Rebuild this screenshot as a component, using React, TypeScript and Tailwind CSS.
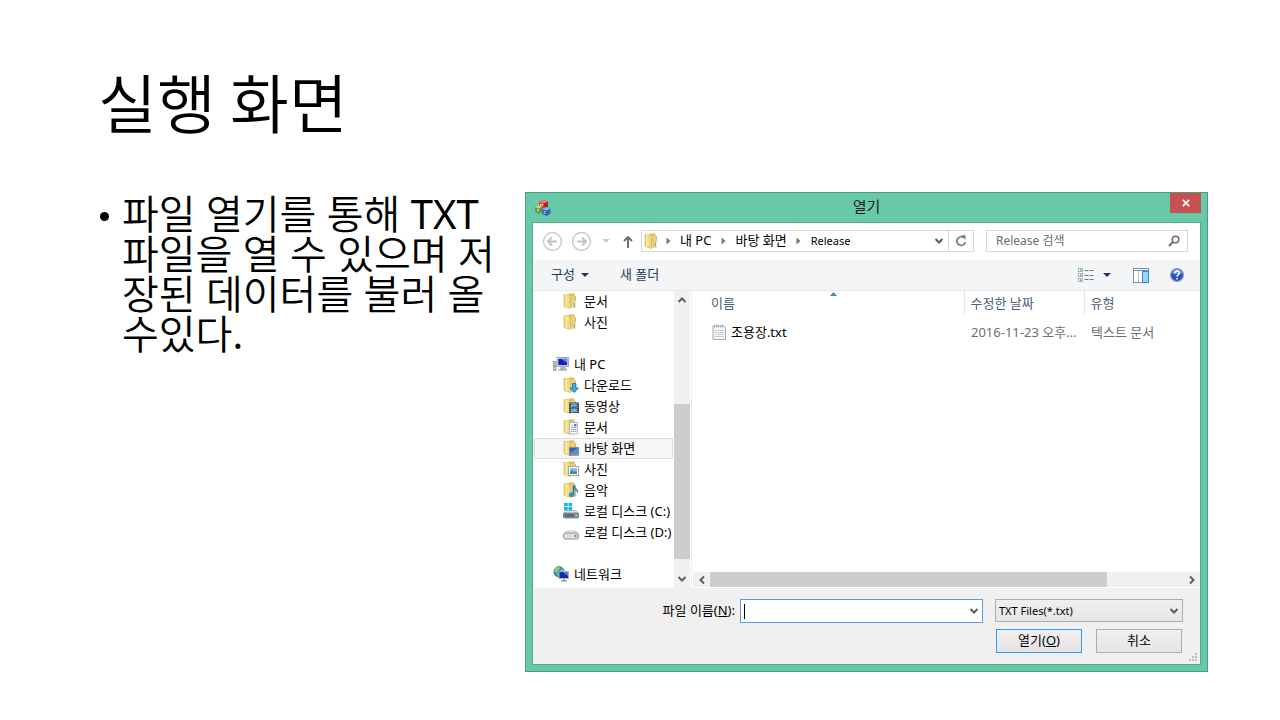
import type { ReactNode } from "react";

function Svg({ w = 16, h = 16, children }: { w?: number; h?: number; children: ReactNode }) {
  return (
    <svg width={w} height={h} viewBox={`0 0 ${w} ${h}`} className="block shrink-0" aria-hidden="true">
      {children}
    </svg>
  );
}

function FolderShape() {
  return (
    <>
      <path d="M1 1h6v13.500l-6-1z" fill="#eed27a" />
      <path d="M6 .5h5.500V3H13v11.500H6z" fill="#d9bb58" />
      <path d="M7.500 2.500h4.500v11.500H7.500z" fill="#e9cf78" />
      <path d="M2 1.500 7 3.500V15.500l-5-2z" fill="#f8e69c" />
      <path d="M4.500 2.500 7.500 3.500V15.500l-3-1z" fill="#efd987" />
      <path d="M1 1v12.500l6.500 2V4" fill="none" stroke="#cfb04c" strokeWidth=".6" />
    </>
  );
}

function FolderIcon() {
  return (
    <Svg>
      <FolderShape />
      <path d="M11.500 10v3.500" stroke="#5db4e6" />
      <path d="M12.500 8v6.500" stroke="#e6eee0" />
    </Svg>
  );
}

function DownloadIcon() {
  return (
    <Svg>
      <FolderShape />
      <path d="M9.500 6.500h3.500V11h2.500L11.200 15.600 7 11h2.500z" fill="#3ba7e8" stroke="#1b73b4" strokeWidth=".8" />
    </Svg>
  );
}

function VideoIcon() {
  return (
    <Svg>
      <FolderShape />
      <rect x="6" y="4.500" width="10" height="10.500" fill="#30353b" />
      <rect x="8" y="5" width="6" height="4.500" fill="#4c93c8" />
      <rect x="8" y="10.300" width="6" height="4.200" fill="#6c9dbb" />
      <path d="M8 9l2.500-3 3 3M8 14l3-2.500 3 2.500" stroke="#b9d3c0" strokeWidth=".7" fill="none" />
      <path d="M7 5v10M15 5v10" stroke="#d9dde0" strokeDasharray="1 1" strokeWidth=".8" />
    </Svg>
  );
}

function DocumentsIcon() {
  return (
    <Svg>
      <FolderShape />
      <rect x="6.500" y="3.500" width="8" height="11.500" fill="#f8fafc" stroke="#a3afb9" strokeWidth=".8" />
      <path d="M8 6.500h2M8 8.500h5.500M8 10.500h5.500M8 12.500h5.500" stroke="#99aaba" strokeWidth=".9" />
      <rect x="11" y="5" width="2.500" height="2.500" fill="#398ed4" />
    </Svg>
  );
}

function DesktopIcon() {
  return (
    <Svg>
      <FolderShape />
      <rect x="6.500" y="7.500" width="9" height="6" fill="#2f65ae" stroke="#7d8b9a" />
      <path d="M7 13l8-5v5z" fill="#4f91d5" />
      <path d="M6 15h10" stroke="#3f4a58" />
    </Svg>
  );
}

function PicturesIcon() {
  return (
    <Svg>
      <FolderShape />
      <rect x="5.500" y="5.500" width="10" height="9" fill="#fff" stroke="#9aa8b2" />
      <rect x="7" y="7" width="7" height="6" fill="#82c2e6" />
      <path d="M7 13v-2l2-2 2 2 1-1 2 1v2z" fill="#4e8b79" />
    </Svg>
  );
}

function MusicIcon() {
  return (
    <Svg>
      <FolderShape />
      <path d="M10.500 4v8" stroke="#1674bd" strokeWidth="1.500" />
      <path d="M11 3c0 3 4.500 3.500 3.500 7.500C14 8.500 12.500 8 11 7.500z" fill="#3faaf0" stroke="#1674bd" strokeWidth=".7" />
      <ellipse cx="8.700" cy="12.700" rx="2.500" ry="2" fill="#3297df" stroke="#1265a8" strokeWidth=".6" />
    </Svg>
  );
}

function ComputerIcon() {
  return (
    <Svg>
      <rect x=".5" y="5.500" width="2.500" height="9" fill="#c7cbd0" stroke="#888e95" strokeWidth=".7" />
      <rect x="1.200" y="9" width="1.200" height="2" fill="#52ae45" />
      <rect x="4" y="1.500" width="11.500" height="9" fill="#dbdfe6" stroke="#9298a3" strokeWidth=".8" />
      <rect x="5.300" y="2.800" width="8.900" height="6.300" fill="#1624ae" />
      <path d="M8 2.800h6.200V7z" fill="#6389f1" />
      <path d="M8 10.500h4l1.500 3H6.500z" fill="#adb3bb" />
      <path d="M5.500 14h8.500" stroke="#858c96" />
    </Svg>
  );
}

function SystemDriveIcon() {
  return (
    <Svg>
      <path d="M3 7.500h10l2.500 3H.5z" fill="#dfe2e4" stroke="#a5abb0" strokeWidth=".7" />
      <rect x=".5" y="10" width="15" height="5" rx="1" fill="#8d989f" stroke="#6f777c" strokeWidth=".8" />
      <rect x="1.500" y="11" width="10" height="3" fill="#54707e" />
      <rect x="12.500" y="11.500" width="2" height="2" fill="#5fe05a" />
      <path d="M1 0h3.700v3.300H1zM5.500 0h3.700v3.300H5.500zM1 4.100h3.700v3.300H1zM5.500 4.100h3.700v3.300H5.500z" fill="#12b5f2" />
    </Svg>
  );
}

function DriveIcon() {
  return (
    <Svg>
      <path d="M3.500 7h9l2.500 3H1z" fill="#f1f2f3" stroke="#b3b7bb" strokeWidth=".7" />
      <rect x=".5" y="9" width="15" height="6" rx="2" fill="#dfe0e1" stroke="#85898d" strokeWidth=".9" />
      <rect x="11.500" y="11" width="2" height="2" fill="#48a835" />
    </Svg>
  );
}

function NetworkIcon() {
  return (
    <Svg>
      <circle cx="6" cy="5.700" r="5.200" fill="#2b8fcf" stroke="#176aa3" strokeWidth=".6" />
      <path d="M2 2.500C4 .5 6.500.7 7 2S5 4 4.500 6 2 6.500 1 5zM8 2.500l2.500 1.500-1 3-2-1zM3.500 7.500l3 .5-1 2.500z" fill="#86d252" />
      <rect x="6" y="5.500" width="9.500" height="7" fill="#1428aa" stroke="#aeb8c7" strokeWidth=".9" />
      <path d="M9.500 6h5.500v4z" fill="#557ee8" />
      <path d="M11 13v2M8 15h6" stroke="#6b7480" />
    </Svg>
  );
}

function Chevron({ dir = "down" }: { dir?: "down" | "up" | "left" | "right" }) {
  const paths = {
    down: "M1.500 3 5 6.500 8.500 3",
    up: "M1.500 7 5 3.500 8.500 7",
    left: "M7 1.500 3.500 5 7 8.500",
    right: "M3 1.500 6.500 5 3 8.500",
  };
  return (
    <Svg w={10} h={10}>
      <path d={paths[dir]} fill="none" stroke="#5d5d5d" strokeWidth="2" />
    </Svg>
  );
}

function Crumb({ children }: { children: ReactNode }) {
  return (
    <li className="flex items-center">
      <span className="flex w-4 justify-center">
        <Svg w={5} h={8}>
          <path d="M.5.5 4.500 4 .5 7.500z" fill="#777" />
        </Svg>
      </span>
      <button type="button" className="px-1 pb-0.5">
        {children}
      </button>
    </li>
  );
}

const places: { label: string; icon: ReactNode; root?: boolean; gap?: boolean; active?: boolean }[] = [
  { label: "문서", icon: <FolderIcon /> },
  { label: "사진", icon: <FolderIcon /> },
  { label: "내 PC", icon: <ComputerIcon />, root: true, gap: true },
  { label: "다운로드", icon: <DownloadIcon /> },
  { label: "동영상", icon: <VideoIcon /> },
  { label: "문서", icon: <DocumentsIcon /> },
  { label: "바탕 화면", icon: <DesktopIcon />, active: true },
  { label: "사진", icon: <PicturesIcon /> },
  { label: "음악", icon: <MusicIcon /> },
  { label: "로컬 디스크 (C:)", icon: <SystemDriveIcon /> },
  { label: "로컬 디스크 (D:)", icon: <DriveIcon /> },
  { label: "네트워크", icon: <NetworkIcon />, root: true, gap: true },
];

function TitleBar() {
  return (
    <header className="grid h-[29px] grid-cols-[40px_1fr_40px]">
      <div className="flex items-center pl-0.5">
        <Svg w={18} h={18}>
          <path d="M5 3 9 1l5 1.500v5L10 10 5 8z" fill="#d44031" />
          <path d="M5 3 9 1l5 1.500-4 2z" fill="#f17c64" />
          <path d="M10 4.500 14 2.500v5L10 10z" fill="#a92720" />
          <path d="M1 8l3-2 4 1.500v5L5 15l-4-2z" fill="#5c9a3b" />
          <path d="M1 8l3-2 4 1.500-3 2z" fill="#c2d58a" />
          <path d="M8 10l4-2 4.500 1.500v5L13 17l-5-2z" fill="#2c6cb5" />
          <path d="M8 10l4-2 4.500 1.500L13 11.500z" fill="#83b9e7" />
          <path d="M11.500 12.500c-2-1-2 2.500 0 2M6.500 7V5l1 1 1-1v2M3 10.500h2M4 10.500v2.500" stroke="#fff" strokeWidth=".7" fill="none" />
        </Svg>
      </div>
      <h2 className="pt-[3px] text-center text-[15px] leading-5 text-[#222]">열기</h2>
      <div className="flex items-start justify-end">
        <button type="button" aria-label="닫기" className="flex h-5 w-[31px] shrink-0 items-center justify-center bg-[#c75050]">
          <Svg w={8} h={8}>
            <path d="M.8.8l6.400 6.400M7.200.8.8 7.200" stroke="#fff" strokeWidth="1.700" />
          </Svg>
        </button>
      </div>
    </header>
  );
}

function AddressRow() {
  return (
    <div className="flex h-[37px] items-center bg-white pr-3 pb-px pl-[9px]">
      <button type="button" aria-label="뒤로" className="mr-2">
        <Svg w={21} h={21}>
          <circle cx="10.500" cy="10.500" r="9" fill="none" stroke="#c9c9c9" strokeWidth="1.400" />
          <path d="M15 10.500H6.500M10 6.500l-4 4 4 4" fill="none" stroke="#c3c3c3" strokeWidth="2" />
        </Svg>
      </button>
      <button type="button" aria-label="앞으로" className="mr-2.5">
        <Svg w={21} h={21}>
          <circle cx="10.500" cy="10.500" r="9" fill="none" stroke="#c9c9c9" strokeWidth="1.400" />
          <path d="M6 10.500h8.500M11 6.500l4 4-4 4" fill="none" stroke="#c3c3c3" strokeWidth="2" />
        </Svg>
      </button>
      <button type="button" aria-label="최근 위치" className="mr-3">
        <Svg w={8} h={4}>
          <path d="M.5 0h7L4 4z" fill="#c8c8c8" />
        </Svg>
      </button>
      <button type="button" aria-label="위로" className="mr-[7px]">
        <Svg w={12} h={13}>
          <path d="M6 13V2M2 6l4-4 4 4" fill="none" stroke="#6b6b6b" strokeWidth="1.900" />
        </Svg>
      </button>
      <nav aria-label="주소" className="mr-3 flex h-[22px] min-w-0 flex-1 items-center border border-[#d9d9d9] pl-0.5">
        <FolderIcon />
        <ol className="flex flex-1">
          <Crumb>내 PC</Crumb>
          <Crumb>바탕 화면</Crumb>
          <Crumb>
            <span className="text-[11px]">Release</span>
          </Crumb>
        </ol>
        <button type="button" aria-label="이전 위치" className="px-1">
          <Chevron />
        </button>
        <button type="button" aria-label="새로 고침" className="flex h-5 w-[25px] items-center justify-center border-l border-[#d9d9d9]">
          <Svg w={12} h={12}>
            <path d="M8.500 2.500A4.300 4.300 0 1 0 10.300 7" fill="none" stroke="#777" strokeWidth="1.600" />
            <path d="M6 .2h4.500v4.600z" fill="#777" />
          </Svg>
        </button>
      </nav>
      <div className="flex h-[22px] w-[202px] items-center border border-[#d9d9d9] pr-[7px] pl-[9px]">
        <input
          type="text"
          aria-label="Release 검색"
          placeholder="Release 검색"
          className="min-w-0 flex-1 text-[12px] outline-none placeholder:text-[#6d6d6d] placeholder:opacity-100"
        />
        <Svg w={12} h={12}>
          <circle cx="7.500" cy="4.500" r="3.300" fill="none" stroke="#6e6e6e" strokeWidth="1.600" />
          <path d="M5 7 1 11" stroke="#6e6e6e" strokeWidth="2" />
        </Svg>
      </div>
    </div>
  );
}

function Toolbar() {
  return (
    <div className="flex h-[31px] items-center border-b border-[#e4e8ec] bg-[#f4f5f7] pr-4 pl-[18px] text-[#1e395b]">
      <button type="button" className="mr-[31px] flex items-center gap-1.5">
        <span className="pb-0.5">구성</span>
        <Svg w={8} h={4}>
          <path d="M0 0h8L4 4z" fill="#1e395b" />
        </Svg>
      </button>
      <button type="button" className="pb-0.5">
        새 폴더
      </button>
      <button type="button" aria-label="보기" className="mr-[22px] ml-auto flex items-center gap-[9px]">
        <Svg w={16} h={14}>
          <path d="M.5.5h4v3h-4zM.5 5.500h4v3h-4zM.5 10.500h4v3h-4z" fill="#fff" stroke="#8c9aa9" strokeWidth=".8" />
          <path d="M2 1.500h1.500v1.200H2z" fill="#37a349" />
          <path d="M2 6.500h1.500v1.200H2z" fill="#dd3b32" />
          <path d="M2 11.500h1.500v1.200H2z" fill="#337bd0" />
          <path d="M6.500 2.500h4M11.500 2.500h4M6.500 7.500h4M11.500 7.500h4M6.500 11.500h4M11.500 11.500h4" stroke="#66788b" />
        </Svg>
        <Svg w={8} h={4}>
          <path d="M0 0h8L4 4z" fill="#1e395b" />
        </Svg>
      </button>
      <button type="button" aria-label="미리 보기 창" className="mr-[21px]">
        <Svg w={16} h={15}>
          <rect x=".5" y=".5" width="15" height="14" fill="#fff" stroke="#7890a5" />
          <path d="M1 2.500h14" stroke="#7890a5" />
          <path d="M5.500 3v11" stroke="#b1bdc7" />
          <rect x="9.500" y="3.500" width="6" height="11" fill="#9bd3fa" stroke="#2b8adf" />
        </Svg>
      </button>
      <button type="button" aria-label="도움말">
        <Svg w={14} h={14}>
          <circle cx="7" cy="7" r="6.400" fill="#2950bd" stroke="#8a99bb" strokeWidth="1.200" />
          <path d="M2 5a5.200 5.200 0 0 1 10 0C9 7 5 7 2 5z" fill="#6e95e7" />
          <path d="M4.800 5.200c0-3 4.700-2.700 4.500 0C9.200 7 7 6.700 7 8.800M7 10v1.500" fill="none" stroke="#fff" strokeWidth="1.500" />
        </Svg>
      </button>
    </div>
  );
}

function Sidebar() {
  return (
    <div className="flex w-[157px] shrink-0">
      <ul className="min-w-0 flex-1 px-px">
        {places.map((p, i) => (
          <li key={i} className={p.gap ? "pt-[21px]" : ""}>
            <button
              type="button"
              className={
                "flex h-[21px] w-full items-center gap-[5px] border pb-px whitespace-nowrap " +
                (p.active ? "border-[#dedede] bg-[#f7f7f7] " : "border-transparent ") +
                (p.root ? "pl-[18px]" : "pl-7")
              }
            >
              {p.icon}
              <span className="pb-px">{p.label}</span>
            </button>
          </li>
        ))}
      </ul>
      <div className="flex w-4 shrink-0 flex-col items-center bg-[#f0f0f0]">
        <div className="flex h-[18px] items-center">
          <Chevron dir="up" />
        </div>
        <div className="mt-auto h-[155px] w-full bg-[#cdcdcd]" />
        <div className="mt-[11px] flex h-[18px] items-center">
          <Chevron />
        </div>
      </div>
    </div>
  );
}

function FileList() {
  return (
    <div className="ml-px flex min-w-0 flex-1 flex-col border-l border-[#f0f0f0] pl-px">
      <table className="w-full table-fixed border-collapse text-left whitespace-nowrap">
        <colgroup>
          <col />
          <col className="w-[120px]" />
          <col className="w-[116px]" />
        </colgroup>
        <thead className="text-[#4c607a]">
          <tr className="h-6">
            <th className="relative pl-[18px] font-normal">
              이름
              <span className="absolute top-px left-1/2 ml-0.5">
                <Svg w={7} h={4}>
                  <path d="M0 4 3.500 0 7 4z" fill="#4b86ab" />
                </Svg>
              </span>
            </th>
            <th className="border-l border-[#dfe9f5] pl-1.5 font-normal">수정한 날짜</th>
            <th className="border-l border-[#dfe9f5] pl-1.5 font-normal">유형</th>
          </tr>
        </thead>
        <tbody className="text-[#6d6d6d]">
          <tr className="h-[33px]">
            <td className="pl-[19px] text-black">
              <span className="flex items-center gap-1">
                <Svg w={15} h={16}>
                  <path d="M1 2h11l1.500 2v11.500H1z" fill="#f6f7f8" stroke="#999fa3" strokeWidth=".9" />
                  <path d="M2.500.5v3M4.500.5v3M6.500.5v3M8.500.5v3M10.500.5v3" stroke="#a4a9ad" strokeWidth=".8" />
                  <path d="M2.500 6.500h9.500M2.500 8.500h9.500M2.500 10.500h9.500M2.500 12.500h9.500" stroke="#b9cad7" strokeWidth=".9" />
                </Svg>
                조용장.txt
              </span>
            </td>
            <td className="pl-[7px]">2016-11-23 오후...</td>
            <td className="pl-[7px]">텍스트 문서</td>
          </tr>
        </tbody>
      </table>
      <div className="mt-auto mb-px flex h-[15px] items-center bg-[#f0f0f0]">
        <div className="flex w-[17px] justify-center">
          <Chevron dir="left" />
        </div>
        <div className="flex h-full flex-1">
          <div className="h-full w-[84%] bg-[#cdcdcd]" />
        </div>
        <div className="flex w-[17px] justify-center">
          <Chevron dir="right" />
        </div>
      </div>
    </div>
  );
}

function DialogFooter() {
  return (
    <footer className="relative bg-[#f0f0f0] pt-[11px] pr-[17px] pb-[11px]">
      <div className="flex items-start">
        <label htmlFor="file-name" className="mr-[5px] ml-auto leading-[22px]">
          파일 이름(<u>N</u>):
        </label>
        <div className="mr-3 flex h-6 w-[243px] items-center border border-[#569de5] bg-white px-[3px]">
          <span className="h-[15px] w-px bg-black" />
          <input id="file-name" type="text" className="min-w-0 flex-1 outline-none" />
          <Chevron />
        </div>
        <div className="grid h-[23px] w-[188px] items-center border border-[#acacac] bg-linear-to-b from-[#f0f0f0] to-[#e5e5e5]">
          <select aria-label="파일 형식" className="col-start-1 row-start-1 h-[21px] w-full appearance-none pl-[3px] text-[11px] outline-none">
            <option>TXT Files(*.txt)</option>
          </select>
          <span className="pointer-events-none col-start-1 row-start-1 justify-self-end pr-[3px]">
            <Chevron />
          </span>
        </div>
      </div>
      <div className="mt-1.5 flex justify-end gap-3.5 pr-px">
        <button type="button" className="h-6 w-[86px] border border-[#3399ff] bg-linear-to-b from-[#f0f0f0] to-[#e5e5e5] pb-0.5">
          열기(<u>O</u>)
        </button>
        <button type="button" className="h-6 w-[86px] border border-[#acacac] bg-linear-to-b from-[#f0f0f0] to-[#e5e5e5] pb-0.5">
          취소
        </button>
      </div>
      <span className="absolute right-0.5 bottom-0.5">
        <Svg w={9} h={9}>
          <path d="M6 0h2v2H6zM3 3h2v2H3zM6 3h2v2H6zM0 6h2v2H0zM3 6h2v2H3zM6 6h2v2H6z" fill="#bdbdbd" />
        </Svg>
      </span>
    </footer>
  );
}

export default function App() {
  return (
    <main className="min-h-screen bg-white pr-[72px] pl-[98px] font-['Noto_Sans','Noto_Sans_CJK_KR',sans-serif] text-black">
      <h1 className="pt-14 font-['Noto_Sans_CJK_KR_DemiLight','Noto_Sans_CJK_KR',sans-serif] text-[64px] leading-[88px] font-[350]">실행 화면</h1>
      <div className="mt-12 flex items-start">
        <ul className="w-[427px] shrink-0 font-['Noto_Sans','Noto_Sans_CJK_KR_DemiLight','Noto_Sans_CJK_KR',sans-serif] text-[40px] leading-10 font-[350]">
          <li className="flex gap-3 pt-0.5 whitespace-nowrap">
            <span className="flex h-11 w-3 items-center justify-center">
              <span className="size-[9px] rounded-full bg-black" />
            </span>
            <p>
              파일 열기를 통해 <span className="font-normal">TXT</span>
              <br />
              파일을 열 수 있으며 저
              <br />
              장된 데이터를 불러 올
              <br />
              수있다<span className="font-normal">.</span>
            </p>
          </li>
        </ul>
        <section role="dialog" aria-label="열기" className="min-w-0 flex-1 border border-[#4d9a80] bg-[#68c9a9] px-1.5 pb-1.5 text-[13px] leading-4">
          <TitleBar />
          <div className="border border-[#57a98d] bg-white">
            <AddressRow />
            <Toolbar />
            <div className="flex h-[297px]">
              <Sidebar />
              <FileList />
            </div>
            <DialogFooter />
          </div>
        </section>
      </div>
    </main>
  );
}
